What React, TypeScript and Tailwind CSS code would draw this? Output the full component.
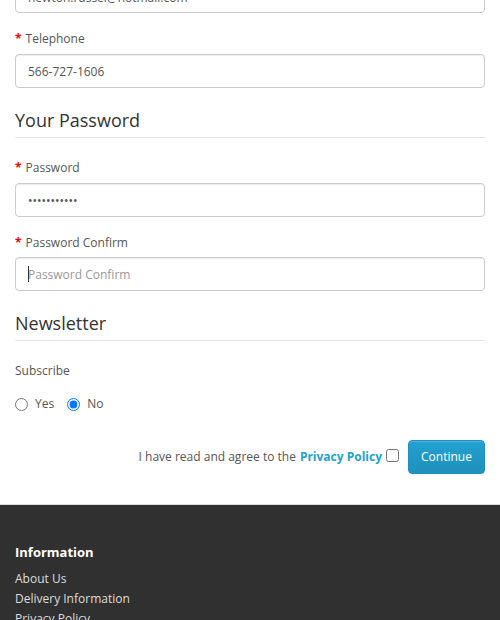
import React from "react";

const font = { fontFamily: '"Open Sans", "Liberation Sans", sans-serif' };

function Label({ text, required = true }: { text: string; required?: boolean }) {
  return (
    <div className="h-[20px] leading-[20px] pt-[1px] text-[12px] text-[#555]">
      {required && <span className="text-[#f00] font-bold mr-[4px]">*</span>}
      {text}
    </div>
  );
}

const inputCls =
  "block w-full h-[34px] px-[12px] border border-[#ccc] rounded-[4px] bg-white text-[12px] text-[#555] placeholder:text-[#999] outline-none shadow-[inset_0_1px_1px_rgba(0,0,0,0.075)]";

function Legend({ text }: { text: string }) {
  return (
    <div className="pt-[6px] pb-[4px] leading-[26px] text-[18px] text-[#333] border-b border-[#e5e5e5]">
      {text}
    </div>
  );
}

export default function App() {
  return (
    <div style={font} className="w-[500px] h-[620px] overflow-hidden bg-white">
      <div className="px-[15px]">
        <div className={`${inputCls} -mt-[21px] flex items-center pt-[3px]`}>newton.russel@hotmail.com</div>
        <div className="mt-[15px]">
          <Label text="Telephone" />
          <input className={`${inputCls} mt-[6px]`} defaultValue="566-727-1606" />
        </div>
        <div className="mt-[13px]">
          <Legend text="Your Password" />
        </div>
        <div className="mt-[19px]">
          <Label text="Password" />
          <input type="password" className={`${inputCls} mt-[6px]`} defaultValue="abcdefghijk" />
        </div>
        <div className="mt-[15px]">
          <Label text="Password Confirm" />
          <div className="relative mt-[5px]">
            <input type="password" className={inputCls} placeholder="Password Confirm" />
            <span className="absolute left-[13px] top-[9px] w-px h-[16px] bg-[#333]" />
          </div>
        </div>
        <div className="mt-[13px]">
          <Legend text="Newsletter" />
        </div>
        <div className="mt-[19px]">
          <Label text="Subscribe" required={false} />
          <div className="mt-[14px] flex items-center h-[20px] text-[12px] text-[#555]">
            <label className="flex items-center">
              <input type="radio" name="sub" className="m-0 w-[13px] h-[13px]" />
              <span className="ml-[7px]">Yes</span>
            </label>
            <label className="flex items-center ml-[13px]">
              <input type="radio" name="sub" defaultChecked className="m-0 w-[13px] h-[13px]" />
              <span className="ml-[7px]">No</span>
            </label>
          </div>
        </div>
        <div className="mt-[26px] flex justify-end items-center">
          <div className="text-[12px] text-[#555] flex items-center">
            <span>I have read and agree to the </span>
            <span className="font-bold text-[#23a1d1] ml-[4px]">Privacy Policy</span>
            <input type="checkbox" className="m-0 ml-[4px] -mt-[3px] w-[13px] h-[13px]" />
          </div>
          <button className="ml-[9px] h-[34px] w-[77px] rounded-[4px] border border-[#1f90bb] bg-gradient-to-b from-[#23a1d1] to-[#1f90bb] text-white text-[12px] shadow-[inset_0_1px_0_rgba(255,255,255,0.2),0_1px_2px_rgba(0,0,0,0.05)]">
            Continue
          </button>
        </div>
      </div>
      <div className="mt-[30px] border-t border-[#ddd] bg-[#303030] pt-[37px] px-[15px] h-[200px]">
        <div className="text-[13px] font-bold text-white leading-[20px]">Information</div>
        <ul className="mt-[7px] text-[12px] text-[#ddd] leading-[20px]">
          <li>About Us</li>
          <li>Delivery Information</li>
          <li>Privacy Policy</li>
        </ul>
      </div>
    </div>
  );
}
